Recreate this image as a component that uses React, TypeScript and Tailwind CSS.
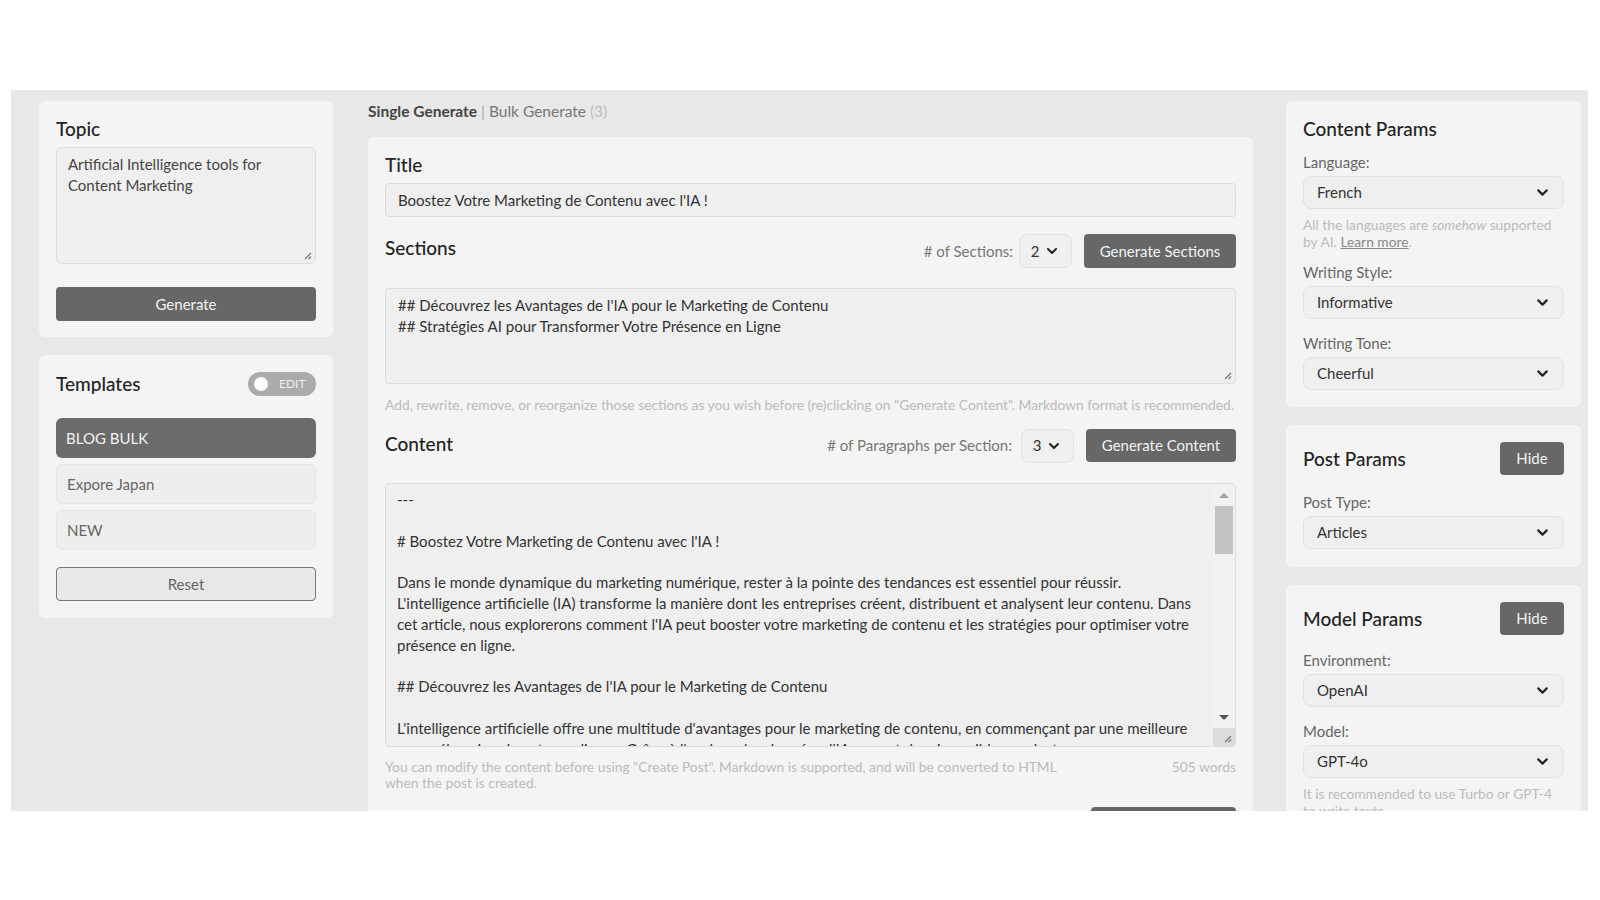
import { ChevronDown } from "lucide-react";

const font = { fontFamily: "Lato, 'Noto Sans', sans-serif" };

function ResizeGrip() {
  return (
    <svg width="10" height="10" viewBox="0 0 10 10" className="text-[#777]">
      <path d="M9 3 L3 9 M9 6.5 L6.5 9" stroke="currentColor" strokeWidth="1.2" />
    </svg>
  );
}

function Select({ value }: { value: string }) {
  return (
    <div className="flex h-[33px] items-center justify-between rounded-lg border border-[#e2e2e2] bg-[#efefef] pl-[13px] pr-[12px] text-[15px] text-[#333]">
      <span>{value}</span>
      <ChevronDown size={17} strokeWidth={3} className="text-[#222]" />
    </div>
  );
}

function Field({ label, value, mt }: { label: string; value: string; mt: string }) {
  return (
    <div className={mt}>
      <div className="text-[15px] leading-5 text-[#666]">{label}</div>
      <div className="mt-[4px]">
        <Select value={value} />
      </div>
    </div>
  );
}

function DarkButton({ label, className }: { label: string; className: string }) {
  return (
    <button className={`flex items-center justify-center rounded-[4px] bg-[#676767] text-[15px] text-[#f2f2f2] ${className}`}>
      {label}
    </button>
  );
}

function SmallSelect({ value }: { value: string }) {
  return (
    <div className="flex h-[34px] w-[53px] items-center justify-center gap-[5px] rounded-lg border border-[#e2e2e2] bg-[#efefef] text-[15px] text-[#333]">
      <span>{value}</span>
      <ChevronDown size={16} strokeWidth={3} className="text-[#222]" />
    </div>
  );
}

const contentLines = [
  "---",
  "",
  "# Boostez Votre Marketing de Contenu avec l'IA !",
  "",
  "Dans le monde dynamique du marketing numérique, rester à la pointe des tendances est essentiel pour réussir.",
  "L'intelligence artificielle (IA) transforme la manière dont les entreprises créent, distribuent et analysent leur contenu. Dans",
  "cet article, nous explorerons comment l'IA peut booster votre marketing de contenu et les stratégies pour optimiser votre",
  "présence en ligne.",
  "",
  "## Découvrez les Avantages de l'IA pour le Marketing de Contenu",
  "",
  "L'intelligence artificielle offre une multitude d'avantages pour le marketing de contenu, en commençant par une meilleure",
  "compréhension de votre audience. Grâce à l'analyse des données, l'IA permet de mieux cibler vos lecteurs.",
];

export default function App() {
  return (
    <div className="min-h-screen bg-white" style={font}>
      <div className="ml-[11px] mt-[90px] h-[721px] w-[1577px] overflow-hidden bg-[#e8e8e8]">
        <div className="flex pl-[28px] pt-[11px]">
          {/* Left column */}
          <div className="flex w-[294px] shrink-0 flex-col gap-[18px]">
            <div className="rounded-md bg-[#f4f4f4] px-[17px] pb-[16px] pt-[16px]">
              <h2 className="text-[19px] font-medium leading-6 text-[#222]">Topic</h2>
              <div className="mt-[6px] flex h-[117px] flex-col justify-between rounded-md border border-[#dcdcdc] bg-[#efefef] pb-[3px] pl-[11px] pr-[3px] pt-[6px]">
                <div className="text-[15px] leading-[21px] text-[#444]">
                  Artificial Intelligence tools for
                  <br />
                  Content Marketing
                </div>
                <div className="flex justify-end">
                  <ResizeGrip />
                </div>
              </div>
              <DarkButton label="Generate" className="mt-[23px] h-[34px] w-full" />
            </div>

            <div className="rounded-md bg-[#f4f4f4] px-[17px] pb-[17px] pt-[17px]">
              <div className="flex h-[24px] items-center justify-between">
                <h2 className="text-[19px] font-medium leading-6 text-[#222]">Templates</h2>
                <div className="flex h-[24px] w-[68px] items-center rounded-full bg-[#ababab] pl-[6px]">
                  <div className="h-[14px] w-[14px] rounded-full bg-white" />
                  <span className="ml-[11px] text-[12px] text-[#eee]">EDIT</span>
                </div>
              </div>
              <div className="mt-[22px] flex flex-col gap-[6px]">
                <div className="flex h-[40px] items-center rounded-md bg-[#6b6b6b] px-[10px] text-[15px] text-[#f2f2f2]">BLOG BULK</div>
                <div className="flex h-[40px] items-center rounded-md border border-[#e6e6e6] bg-[#eeeeee] px-[10px] text-[15px] text-[#666]">Expore Japan</div>
                <div className="flex h-[40px] items-center rounded-md border border-[#e6e6e6] bg-[#eeeeee] px-[10px] text-[15px] text-[#666]">NEW</div>
              </div>
              <button className="mt-[17px] flex h-[34px] w-full items-center justify-center rounded-[4px] border border-[#777] bg-[#e8e8e8] text-[15px] text-[#666]">
                Reset
              </button>
            </div>
          </div>

          {/* Middle column */}
          <div className="ml-[35px] w-[885px] shrink-0">
            <div className="text-[15.5px] leading-5">
              <span className="font-bold text-[#444]">Single Generate</span>
              <span className="text-[#aaa]"> | </span>
              <span className="text-[#777]">Bulk Generate </span>
              <span className="text-[#bbb]">(3)</span>
            </div>
            <div className="mt-[16px] rounded-md bg-[#f4f4f4] px-[17px] pb-[20px] pt-[16px]">
              <h2 className="text-[19px] font-medium leading-6 text-[#222]">Title</h2>
              <div className="mt-[6px] flex h-[34px] items-center rounded-[4px] border border-[#dcdcdc] bg-[#efefef] px-[12px] text-[15px] text-[#333]">
                Boostez Votre Marketing de Contenu avec l'IA !
              </div>

              <div className="mt-[17px] flex h-[34px] items-center justify-between">
                <h2 className="-mt-[6px] text-[19px] font-medium leading-6 text-[#222]">Sections</h2>
                <div className="flex items-center">
                  <span className="mr-[6px] text-[15px] text-[#777]"># of Sections:</span>
                  <SmallSelect value="2" />
                  <DarkButton label="Generate Sections" className="ml-[12px] h-[34px] w-[152px]" />
                </div>
              </div>
              <div className="mt-[20px] flex h-[96px] flex-col justify-between rounded-[4px] border border-[#dcdcdc] bg-[#efefef] pb-[3px] pl-[12px] pr-[3px] pt-[6px]">
                <div className="text-[15px] leading-[21px] text-[#333]">
                  ## Découvrez les Avantages de l'IA pour le Marketing de Contenu
                  <br />
                  ## Stratégies AI pour Transformer Votre Présence en Ligne
                </div>
                <div className="flex justify-end">
                  <ResizeGrip />
                </div>
              </div>
              <p className="mt-[12px] whitespace-nowrap text-[13.8px] leading-[18px] text-[#bbb]">
                Add, rewrite, remove, or reorganize those sections as you wish before (re)clicking on "Generate Content". Markdown format is recommended.
              </p>

              <div className="mt-[15px] flex h-[33px] items-center justify-between">
                <h2 className="-mt-[4px] text-[19px] font-medium leading-6 text-[#222]">Content</h2>
                <div className="flex items-center">
                  <span className="mr-[9px] text-[15px] text-[#777]"># of Paragraphs per Section:</span>
                  <SmallSelect value="3" />
                  <DarkButton label="Generate Content" className="ml-[12px] h-[33px] w-[150px]" />
                </div>
              </div>
              <div className="mt-[21px] flex h-[264px] overflow-hidden rounded-[4px] border border-[#dcdcdc] bg-[#efefef]">
                <div className="flex-1 overflow-hidden pl-[11px] pt-[5px] text-[15px] leading-[20.8px] text-[#333]">
                  {contentLines.map((line, i) => (
                    <div key={i} className="h-[20.8px] whitespace-pre">
                      {line}
                    </div>
                  ))}
                </div>
                <div className="flex w-[22px] flex-col bg-[#f1f1f1]">
                  <div className="flex h-[22px] items-center justify-center">
                    <div className="h-0 w-0 border-x-[5px] border-b-[5px] border-x-transparent border-b-[#a3a3a3]" />
                  </div>
                  <div className="mx-[2px] h-[48px] bg-[#c2c2c2]" />
                  <div className="flex-1" />
                  <div className="flex h-[22px] items-center justify-center">
                    <div className="h-0 w-0 border-x-[5px] border-t-[5px] border-x-transparent border-t-[#505050]" />
                  </div>
                  <div className="flex h-[18px] items-end justify-end bg-[#dcdcdc] pb-[3px] pr-[3px]">
                    <ResizeGrip />
                  </div>
                </div>
              </div>
              <div className="mt-[12px] flex justify-between text-[13.8px] leading-4 text-[#bbb]">
                <p className="whitespace-nowrap">
                  You can modify the content before using "Create Post". Markdown is supported, and will be converted to HTML
                  <br />
                  when the post is created.
                </p>
                <span>505 words</span>
              </div>
              <div className="mt-[16px] flex justify-end">
                <DarkButton label="Create Post" className="h-[34px] w-[145px]" />
              </div>
            </div>
          </div>

          {/* Right column */}
          <div className="ml-[33px] flex w-[295px] shrink-0 flex-col gap-[18px]">
            <div className="rounded-md bg-[#f4f4f4] px-[17px] pb-[17px] pt-[16px]">
              <h2 className="text-[19px] font-medium leading-6 text-[#222]">Content Params</h2>
              <Field label="Language:" value="French" mt="mt-[11px]" />
              <p className="mt-[7px] whitespace-nowrap text-[13.8px] leading-[17px] text-[#bbb]">
                All the languages are <em>somehow</em> supported
                <br />
                by AI. <span className="text-[#888] underline">Learn more</span>.
              </p>
              <Field label="Writing Style:" value="Informative" mt="mt-[12px]" />
              <Field label="Writing Tone:" value="Cheerful" mt="mt-[14px]" />
            </div>

            <div className="rounded-md bg-[#f4f4f4] px-[17px] pb-[18px] pt-[17px]">
              <div className="flex items-center justify-between">
                <h2 className="text-[19px] font-medium leading-6 text-[#222]">Post Params</h2>
                <DarkButton label="Hide" className="h-[33px] w-[64px]" />
              </div>
              <Field label="Post Type:" value="Articles" mt="mt-[17px]" />
            </div>

            <div className="rounded-md bg-[#f4f4f4] px-[17px] pb-[18px] pt-[17px]">
              <div className="flex items-center justify-between">
                <h2 className="text-[19px] font-medium leading-6 text-[#222]">Model Params</h2>
                <DarkButton label="Hide" className="h-[33px] w-[64px]" />
              </div>
              <Field label="Environment:" value="OpenAI" mt="mt-[15px]" />
              <Field label="Model:" value="GPT-4o" mt="mt-[14px]" />
              <p className="mt-[7px] whitespace-nowrap text-[13.8px] leading-[17px] text-[#bbb]">
                It is recommended to use Turbo or GPT-4
                <br />
                to write texts.
              </p>
            </div>
          </div>
        </div>
      </div>
    </div>
  );
}
